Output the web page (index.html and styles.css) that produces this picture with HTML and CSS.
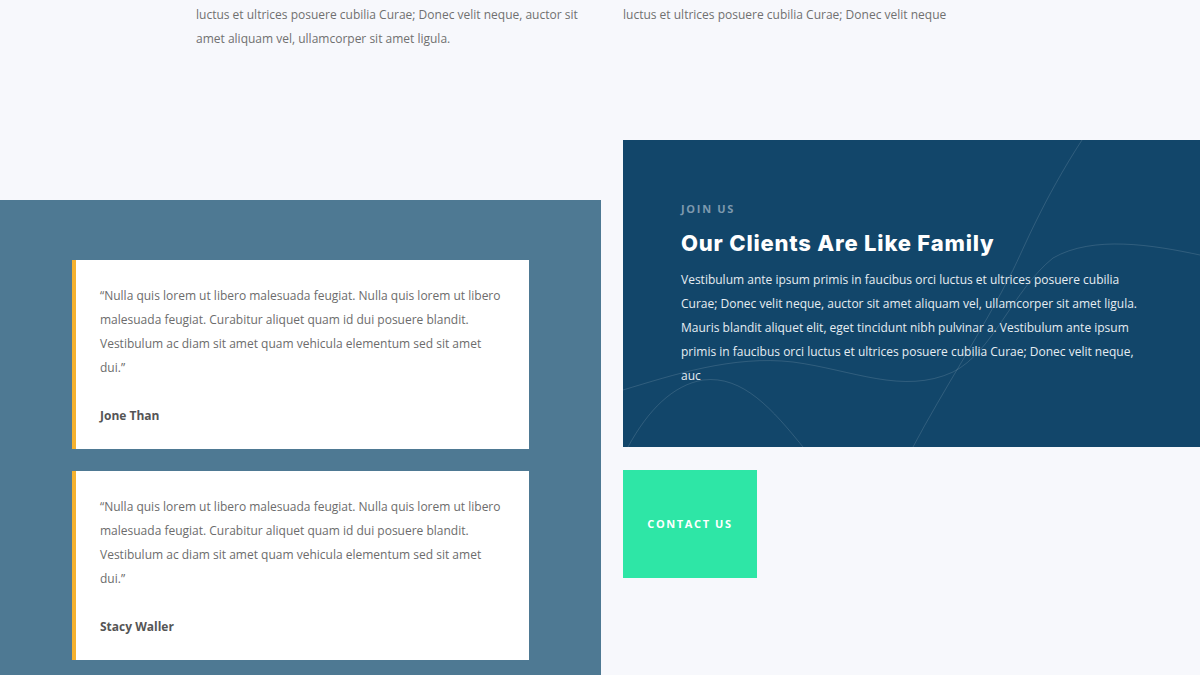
FILE: index.html
```html
<!DOCTYPE html>
<html lang="en">
<head>
<meta charset="utf-8">
<title>Our Clients Are Like Family</title>
<link rel="stylesheet" href="styles.css">
</head>
<body>
<section class="intro">
  <p class="intro-col intro-left">luctus et ultrices posuere cubilia Curae; Donec velit neque, auctor sit amet aliquam vel, ullamcorper sit amet ligula.</p>
  <p class="intro-col intro-right">luctus et ultrices posuere cubilia Curae; Donec velit neque</p>
</section>

<section class="clients">
  <div class="testimonials">
    <div class="card">
      <p class="quote">“Nulla quis lorem ut libero malesuada feugiat. Nulla quis lorem ut libero malesuada feugiat. Curabitur aliquet quam id dui posuere blandit. Vestibulum ac diam sit amet quam vehicula elementum sed sit amet dui.”</p>
      <p class="name">Jone Than</p>
    </div>
    <div class="card">
      <p class="quote">“Nulla quis lorem ut libero malesuada feugiat. Nulla quis lorem ut libero malesuada feugiat. Curabitur aliquet quam id dui posuere blandit. Vestibulum ac diam sit amet quam vehicula elementum sed sit amet dui.”</p>
      <p class="name">Stacy Waller</p>
    </div>
  </div>

  <div class="join">
    <div class="join-panel">
      <svg class="waves" viewBox="0 0 577 307" preserveAspectRatio="none" aria-hidden="true">
        <path d="M459 0 C 420 60, 400 110, 390 130 C 360 190, 320 250, 290 307" />
        <path d="M0 250 C 50 235, 110 215, 170 222 C 230 230, 280 255, 330 232 C 370 212, 390 150, 430 118 C 470 95, 530 105, 577 115" />
        <path d="M5 307 C 25 270, 50 245, 80 240 C 120 235, 150 270, 180 307" />
      </svg>
      <div class="join-content">
        <p class="eyebrow">JOIN US</p>
        <h2 class="title">Our Clients Are Like Family</h2>
        <p class="body">Vestibulum ante ipsum primis in faucibus orci luctus et ultrices posuere cubilia Curae; Donec velit neque, auctor sit amet aliquam vel, ullamcorper sit amet ligula. Mauris blandit aliquet elit, eget tincidunt nibh pulvinar a. Vestibulum ante ipsum primis in faucibus orci luctus et ultrices posuere cubilia Curae; Donec velit neque, auc</p>
      </div>
    </div>
    <a class="contact-btn" href="#">CONTACT US</a>
  </div>
</section>
</body>
</html>
```

FILE: styles.css
```css
* { box-sizing: border-box; }

html, body {
  margin: 0;
  padding: 0;
  background: #f7f8fc;
  font-family: "Open Sans", "Liberation Sans", sans-serif;
  overflow: hidden;
}

p { margin: 0; }

.intro {
  display: flex;
  padding: 3px 0 0 196px;
  gap: 27px;
}

.intro-col {
  font-size: 12px;
  line-height: 24px;
  color: #707070;
}

.intro-left { width: 400px; }
.intro-right { width: 460px; }

.clients {
  display: grid;
  grid-template-columns: 601px 577px;
  column-gap: 22px;
  margin-top: 89px;
  align-items: start;
}

.testimonials {
  margin-top: 60px;
  background: #4e7993;
  padding: 60px 72px 15px;
  display: flex;
  flex-direction: column;
  gap: 22px;
}

.card {
  width: 457px;
  background: #ffffff;
  border-left: 4px solid #f4b12f;
  padding: 24px 24px 21px 24px;
}

.quote {
  font-size: 12px;
  line-height: 24px;
  color: #6c6c6c;
}

.name {
  margin-top: 24px;
  font-size: 12px;
  line-height: 24px;
  font-weight: 700;
  color: #555555;
}

.join {
  display: flex;
  flex-direction: column;
  align-items: flex-start;
  gap: 23px;
}

.join-panel {
  position: relative;
  width: 577px;
  height: 307px;
  background: #12466a;
  overflow: hidden;
}

.waves {
  position: absolute;
  inset: 0;
  width: 100%;
  height: 100%;
}

.waves path {
  fill: none;
  stroke: rgba(255, 255, 255, 0.13);
  stroke-width: 1;
}

.join-content {
  position: relative;
  padding: 62px 50px 0 58px;
}

.eyebrow {
  font-size: 11px;
  line-height: 14px;
  font-weight: 700;
  letter-spacing: 1.7px;
  color: #7d99ae;
}

.title {
  margin: 13px 0 0;
  font-family: "Inter", "Open Sans", sans-serif;
  font-weight: 800;
  font-size: 22px;
  line-height: 28px;
  color: #ffffff;
  letter-spacing: 0.8px;
}

.body {
  margin-top: 11px;
  font-size: 12px;
  line-height: 24px;
  color: #e6edf2;
  width: 462px;
}

.contact-btn {
  display: flex;
  align-items: center;
  justify-content: center;
  width: 134px;
  height: 108px;
  padding-bottom: 2px;
  background: #2ee6a6;
  color: #ffffff;
  font-size: 11px;
  font-weight: 700;
  letter-spacing: 1.6px;
  text-decoration: none;
}
```
